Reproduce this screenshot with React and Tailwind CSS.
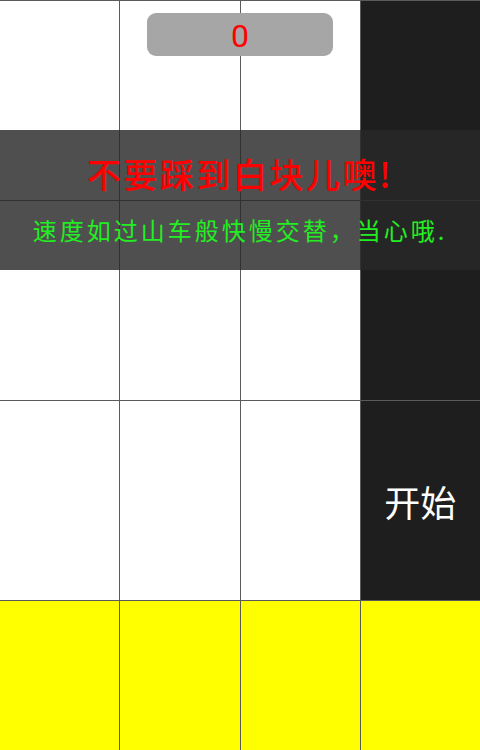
import React from "react";

const cjk = { fontFamily: '"Noto Sans CJK SC", "Noto Sans", sans-serif' };

// 0 = white, 1 = black, 2 = yellow
const rows = [
    [0, 0, 0, 1],
    [0, 0, 0, 1],
    [0, 0, 0, 1],
    [2, 2, 2, 2],
];

function Tile({ kind, children }) {
    const bg = kind === 1 ? "bg-[#1e1e1e]" : kind === 2 ? "bg-[#ffff00]" : "bg-white";
    return <div className={bg + " flex items-center justify-center"}>{children}</div>;
}

export default function App() {
    return (
        <div className="relative w-[480px] h-[750px] overflow-hidden bg-[#5a5a5a]" style={cjk}>
            {/* tiles */}
            <div className="flex flex-col gap-px pt-px">
                {rows.map((row, r) => (
                    <div key={r} className={"grid grid-cols-4 gap-px " + (r === 3 ? "h-[200px]" : "h-[199px]")}>
                        {row.map((kind, c) => (
                            <Tile key={c} kind={kind}>
                                {r === 2 && c === 3 && (
                                    <span className="text-white text-[36px] leading-none">开始</span>
                                )}
                            </Tile>
                        ))}
                    </div>
                ))}
            </div>

            {/* score */}
            <div className="absolute top-[13px] left-[147px] w-[186px] h-[43px] rounded-[9px] bg-[#a6a6a6] flex items-center justify-center">
                <span className="text-[#ff0000] text-[32px] leading-none mt-[3px]" style={{ fontFamily: "Roboto, sans-serif" }}>0</span>
            </div>

            {/* hint */}
            <div className="absolute top-[130px] left-0 w-full h-[140px] bg-[rgba(40,40,40,0.82)] flex flex-col items-center">
                <div className="pt-[22px] text-[#ff0000] text-[34px] font-medium leading-[44px] tracking-[2.5px]">不要踩到白块儿噢!</div>
                <div className="mt-[18px] text-[#22ee22] text-[24px] leading-[32px] tracking-[3px]">速度如过山车般快慢交替，当心哦.</div>
            </div>
        </div>
    );
}
